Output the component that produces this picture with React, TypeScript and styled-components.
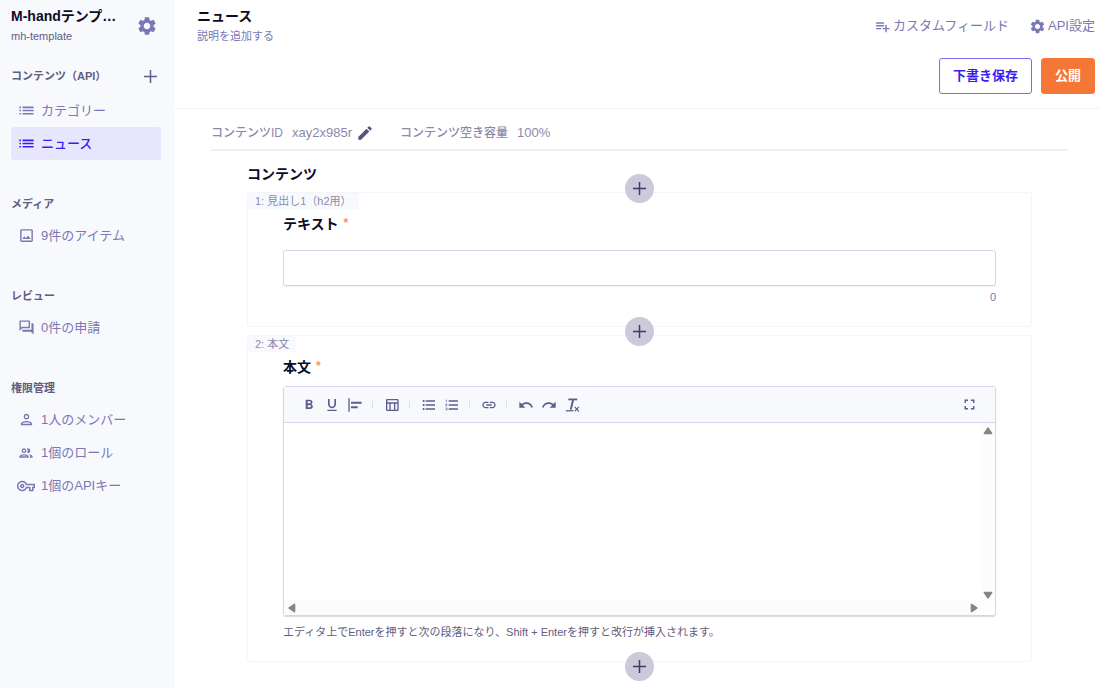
import React from 'react';
import styled, { createGlobalStyle } from 'styled-components';
import type { IconType } from 'react-icons';
import {
  MdAlignHorizontalLeft,
  MdEdit,
  MdFormatBold,
  MdFormatListBulleted,
  MdFormatListNumbered,
  MdFormatUnderlined,
  MdFullscreen,
  MdLink,
  MdList,
  MdOutlineImage,
  MdOutlinePeople,
  MdOutlinePerson,
  MdOutlineQuestionAnswer,
  MdOutlineTableChart,
  MdOutlineVpnKey,
  MdPlaylistAdd,
  MdRedo,
  MdSettings,
  MdUndo,
} from 'react-icons/md';

const color = {
  ink: '#0d0b26',
  muted: '#5f5d80',
  link: '#7a78b4',
  soft: '#8c8aab',
  icon: '#5f5c8d',
  accent: '#3a1df0',
  panel: '#f8f9fd',
  line: '#f4f4f9',
  field: '#d6d4ea',
  orange: '#f47735',
};

const GlobalStyle = createGlobalStyle`
  *, *::before, *::after { box-sizing: border-box; }
  body {
    margin: 0;
    background: #fff;
    color: ${color.ink};
    font-family: "Liberation Sans", "Noto Sans CJK JP", sans-serif;
    font-size: 13px;
    line-height: 20px;
  }
  button, input, textarea { font: inherit; color: inherit; }
  button { padding: 0; border: 0; background: none; cursor: pointer; }
  h1, h2, h3, p, ul, dl, dd { margin: 0; padding: 0; }
  ul { list-style: none; }
  a { text-decoration: none; }
  svg { display: block; flex: none; }
`;

const Page = styled.div`
  display: grid;
  grid-template-columns: 175px minmax(0, 1fr);
  min-height: 100vh;
`;

const Sidebar = styled.aside`
  padding: 6px 14px 0 11px;
  background: ${color.panel};
`;

const Service = styled.div`
  display: flex;
  align-items: center;
  justify-content: space-between;
  padding-right: 3px;
  margin-bottom: 18px;
`;

const Title = styled.h1`
  font-size: 14px;
  font-weight: 700;
  white-space: nowrap;
`;

const ServiceName = styled(Title).attrs({ as: 'p' })``;

const ServiceId = styled.p`
  font-size: 11px;
  color: ${color.muted};
`;

const IconButton = styled.button<{ $color?: string }>`
  display: flex;
  color: ${(p) => p.$color ?? color.link};
`;

const NavSection = styled.section`
  margin-bottom: 34px;
`;

const NavHead = styled.div<{ $tall?: boolean }>`
  display: flex;
  align-items: center;
  justify-content: space-between;
  height: ${(p) => (p.$tall ? 24 : 19)}px;
  margin-bottom: 6px;
`;

const NavTitle = styled.h2`
  font-size: 11px;
  font-weight: 700;
  color: ${color.muted};
  white-space: nowrap;
`;

const NavLink = styled.a<{ $active?: boolean }>`
  display: flex;
  align-items: center;
  gap: 6px;
  height: 33px;
  padding-left: 6px;
  border-radius: 3px;
  white-space: nowrap;
  color: ${(p) => (p.$active ? color.accent : color.link)};
  background: ${(p) => (p.$active ? '#e8e6fd' : 'transparent')};
  font-weight: ${(p) => (p.$active ? 500 : 400)};
`;

const NavIcon = styled.span`
  display: flex;
  justify-content: center;
  width: 18px;
`;

const Main = styled.main`
  min-width: 0;
`;

const Header = styled.header`
  padding: 6px 5px 14px 22px;
  border-bottom: 1px solid ${color.line};
`;

const HeaderRow = styled.div`
  display: flex;
  align-items: center;
  justify-content: space-between;
  margin-bottom: 12px;
`;

const Description = styled.a`
  display: block;
  font-size: 11px;
  color: ${color.link};
`;

const HeaderLinks = styled.nav`
  display: flex;
  gap: 20px;
`;

const HeaderLink = styled.a`
  display: flex;
  align-items: center;
  gap: 2px;
  color: ${color.link};
`;

const Actions = styled.div`
  display: flex;
  justify-content: flex-end;
  gap: 9px;
`;

const Button = styled.button<{ $primary?: boolean }>`
  height: 36px;
  padding: 0 13px;
  border: 1px solid ${(p) => (p.$primary ? color.orange : '#7c6bf2')};
  border-radius: 3px;
  background: ${(p) => (p.$primary ? color.orange : '#fff')};
  color: ${(p) => (p.$primary ? '#fff' : color.accent)};
  font-weight: 700;
`;

const Body = styled.div`
  padding: 14px 32px 4px 36px;
`;

const Meta = styled.dl`
  display: flex;
  gap: 26px;
  padding-bottom: 6px;
  border-bottom: 2px solid #efeef6;
  color: ${color.soft};
`;

const MetaItem = styled.div`
  display: flex;
  align-items: center;
  gap: 9px;
`;

const MetaTerm = styled.dt`
  font-size: 12px;
  font-weight: 500;
`;

const MetaValue = styled.dd`
  display: flex;
  align-items: center;
  gap: 4px;
`;

const Content = styled.section`
  padding: 13px 36px 0;
`;

const ContentTitle = styled.h2`
  font-size: 14px;
  font-weight: 700;
`;

const InsertSlot = styled.div`
  position: relative;
  z-index: 1;
  display: flex;
  align-items: center;
  justify-content: center;
  height: 8px;
`;

const InsertButton = styled.button`
  display: flex;
  flex: none;
  align-items: center;
  justify-content: center;
  width: 29px;
  height: 29px;
  border-radius: 50%;
  background: #cbcadb;
  color: #3f3c66;
`;

const Card = styled.article`
  border: 1px solid ${color.line};
  border-radius: 3px;
`;

const CardTag = styled.h3`
  width: fit-content;
  padding: 0 7px;
  background: ${color.panel};
  color: ${color.soft};
  font-size: 11px;
  font-weight: 400;
  line-height: 16px;
`;

const CardBody = styled.div`
  padding: 5px 35px 21px;
`;

const FieldLabel = styled.label`
  display: flex;
  gap: 5px;
  font-size: 14px;
  font-weight: 700;
`;

const Required = styled.span`
  color: #f7935f;
  font-size: 12px;
  line-height: 18px;
`;

const TextInput = styled.input`
  display: block;
  width: 100%;
  height: 36px;
  margin: 16px 0 3px;
  padding: 0 10px;
  border: 1px solid ${color.field};
  border-radius: 3px;
  background: #fff;
  box-shadow: 0 1px 1px #efeff6;
`;

const Note = styled.p`
  font-size: 11px;
  line-height: 16px;
  color: ${color.muted};
`;

const Counter = styled(Note)`
  color: ${color.link};
  text-align: right;
`;

const Editor = styled.div`
  margin: 9px 0 8px;
  border: 1px solid ${color.field};
  border-radius: 3px;
  box-shadow: 0 1px 1px #d9d9de;
`;

const Toolbar = styled.div`
  display: flex;
  align-items: center;
  height: 36px;
  padding: 0 14px 0 13px;
  border-bottom: 1px solid ${color.field};
  background: ${color.panel};
`;

const Tool = styled.button<{ $end?: boolean }>`
  display: flex;
  justify-content: center;
  width: 23px;
  margin-left: ${(p) => (p.$end ? 'auto' : '0')};
  color: ${color.icon};
`;

const Separator = styled.span`
  width: 1px;
  height: 7px;
  margin: 0 7px 0 6px;
  background: #dcdbe8;
`;

const Sheet = styled.div`
  display: grid;
  grid-template-columns: minmax(0, 1fr) 14px;
  grid-template-rows: 178px 14px;
`;

const TextArea = styled.textarea`
  display: block;
  width: 100%;
  height: 100%;
  padding: 10px;
  border: 0;
  background: #fff;
  resize: none;
  overflow: hidden;
`;

const ScrollTrack = styled.div<{ $vertical?: boolean }>`
  display: flex;
  flex-direction: ${(p) => (p.$vertical ? 'column' : 'row')};
  align-items: center;
  justify-content: space-between;
  padding: ${(p) => (p.$vertical ? '3px 0 1px' : '0 2px 0 3px')};
  background: #fcfcfc;
`;

type Direction = 'up' | 'down' | 'left' | 'right';

const arrowPaths: Record<Direction, string> = {
  up: 'M5 2.2 8.6 7.5H1.4z',
  down: 'M5 7.8 1.4 2.5h7.2z',
  left: 'M2.2 5 7.5 1.4v7.2z',
  right: 'M7.8 5 2.5 8.6V1.4z',
};

const Arrow = ({ to }: { to: Direction }) => (
  <svg width="10" height="10" viewBox="0 0 10 10" aria-hidden="true">
    <path d={arrowPaths[to]} fill="#858585" stroke="#858585" strokeWidth="1.6" strokeLinejoin="round" />
  </svg>
);

const Plus = () => (
  <svg width="21" height="21" viewBox="0 0 21 21" fill="none" stroke="currentColor" strokeWidth="1.5" aria-hidden="true">
    <path d="M10.5 4v13M4 10.5h13" />
  </svg>
);

/* Slanted T over a baseline with a small cross at its foot */
const ClearFormat = ({ size }: { size: number }) => (
  <svg width={size} height={size} viewBox="0 0 20 20" fill="none" stroke="currentColor" aria-hidden="true">
    <path d="M5.4 3h11.2" strokeWidth="2.2" />
    <path d="M11.6 3 8.4 15.5" strokeWidth="2.4" />
    <path d="M2.2 17.2h9.4" strokeWidth="1.6" />
    <path d="m13.4 12.4 5.2 5.6m0-5.6L13.4 18" strokeWidth="1.5" />
  </svg>
);

type ToolIcon = IconType | typeof ClearFormat;
type NavItem = { label: string; icon: IconType; size?: number; active?: boolean };
type NavGroup = { title: string; addable?: boolean; items: NavItem[] };

const navGroups: NavGroup[] = [
  {
    title: 'コンテンツ（API）',
    addable: true,
    items: [
      { label: 'カテゴリー', icon: MdList, size: 19 },
      { label: 'ニュース', icon: MdList, size: 19, active: true },
    ],
  },
  { title: 'メディア', items: [{ label: '9件のアイテム', icon: MdOutlineImage, size: 17 }] },
  { title: 'レビュー', items: [{ label: '0件の申請', icon: MdOutlineQuestionAnswer, size: 17 }] },
  {
    title: '権限管理',
    items: [
      { label: '1人のメンバー', icon: MdOutlinePerson, size: 17 },
      { label: '1個のロール', icon: MdOutlinePeople, size: 16 },
      { label: '1個のAPIキー', icon: MdOutlineVpnKey },
    ],
  },
];

const toolGroups: { name: string; icon: ToolIcon }[][] = [
  [
    { name: '太字', icon: MdFormatBold },
    { name: '下線', icon: MdFormatUnderlined },
    { name: '左揃え', icon: MdAlignHorizontalLeft },
  ],
  [{ name: '表', icon: MdOutlineTableChart }],
  [
    { name: '箇条書き', icon: MdFormatListBulleted },
    { name: '番号付きリスト', icon: MdFormatListNumbered },
  ],
  [{ name: 'リンク', icon: MdLink }],
  [
    { name: '元に戻す', icon: MdUndo },
    { name: 'やり直す', icon: MdRedo },
    { name: '書式をクリア', icon: ClearFormat },
  ],
];

const Insert = () => (
  <InsertSlot>
    <InsertButton type="button" aria-label="フィールドを追加">
      <Plus />
    </InsertButton>
  </InsertSlot>
);

export default function App() {
  return (
    <>
      <GlobalStyle />
      <Page>
        <Sidebar>
          <Service>
            <div>
              <ServiceName>M-handテンプ…</ServiceName>
              <ServiceId>mh-template</ServiceId>
            </div>
            <IconButton type="button" aria-label="サービス設定">
              <MdSettings size={22} />
            </IconButton>
          </Service>
          {navGroups.map((group) => (
            <NavSection key={group.title}>
              <NavHead $tall={group.addable}>
                <NavTitle>{group.title}</NavTitle>
                {group.addable && (
                  <IconButton type="button" aria-label="APIを追加" $color={color.icon}>
                    <Plus />
                  </IconButton>
                )}
              </NavHead>
              <ul>
                {group.items.map(({ label, icon: Icon, size = 18, active }) => (
                  <li key={label}>
                    <NavLink href="#" $active={active} aria-current={active ? 'page' : undefined}>
                      <NavIcon>
                        <Icon size={size} />
                      </NavIcon>
                      {label}
                    </NavLink>
                  </li>
                ))}
              </ul>
            </NavSection>
          ))}
        </Sidebar>

        <Main>
          <Header>
            <HeaderRow>
              <div>
                <Title>ニュース</Title>
                <Description href="#">説明を追加する</Description>
              </div>
              <HeaderLinks>
                <HeaderLink href="#">
                  <MdPlaylistAdd size={17} />
                  カスタムフィールド
                </HeaderLink>
                <HeaderLink href="#">
                  <MdSettings size={17} />
                  API設定
                </HeaderLink>
              </HeaderLinks>
            </HeaderRow>
            <Actions>
              <Button type="button">下書き保存</Button>
              <Button type="button" $primary>
                公開
              </Button>
            </Actions>
          </Header>

          <Body>
            <Meta>
              <MetaItem>
                <MetaTerm>コンテンツID</MetaTerm>
                <MetaValue>
                  xay2x985r
                  <IconButton type="button" aria-label="コンテンツIDを編集" $color="#55527f">
                    <MdEdit size={18} />
                  </IconButton>
                </MetaValue>
              </MetaItem>
              <MetaItem>
                <MetaTerm>コンテンツ空き容量</MetaTerm>
                <MetaValue>100%</MetaValue>
              </MetaItem>
            </Meta>

            <Content>
              <ContentTitle>コンテンツ</ContentTitle>
              <Insert />
              <Card>
                <CardTag>1: 見出し1（h2用）</CardTag>
                <CardBody>
                  <FieldLabel htmlFor="heading-text">
                    テキスト<Required>*</Required>
                  </FieldLabel>
                  <TextInput id="heading-text" type="text" />
                  <Counter>0</Counter>
                </CardBody>
              </Card>
              <Insert />
              <Card>
                <CardTag>2: 本文</CardTag>
                <CardBody>
                  <FieldLabel htmlFor="body-text">
                    本文<Required>*</Required>
                  </FieldLabel>
                  <Editor>
                    <Toolbar role="toolbar">
                      {toolGroups.map((tools, index) => (
                        <React.Fragment key={tools[0].name}>
                          {index > 0 && <Separator />}
                          {tools.map(({ name, icon: Icon }) => (
                            <Tool key={name} type="button" aria-label={name}>
                              <Icon size={16} />
                            </Tool>
                          ))}
                        </React.Fragment>
                      ))}
                      <Tool type="button" aria-label="全画面表示" $end>
                        <MdFullscreen size={17} />
                      </Tool>
                    </Toolbar>
                    <Sheet>
                      <TextArea id="body-text" />
                      <ScrollTrack $vertical>
                        <Arrow to="up" />
                        <Arrow to="down" />
                      </ScrollTrack>
                      <ScrollTrack>
                        <Arrow to="left" />
                        <Arrow to="right" />
                      </ScrollTrack>
                    </Sheet>
                  </Editor>
                  <Note>
                    エディタ上でEnterを押すと次の段落になり、Shift + Enterを押すと改行が挿入されます。
                  </Note>
                </CardBody>
              </Card>
              <Insert />
            </Content>
          </Body>
        </Main>
      </Page>
    </>
  );
}
